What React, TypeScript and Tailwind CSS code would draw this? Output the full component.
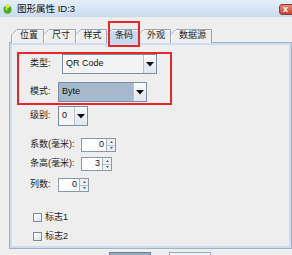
import React from 'react'

const tabs = [
  { label: '位置', w: 33, cls: 'w-[33px]' },
  { label: '尺寸', w: 33, cls: 'w-[33px] -ml-px' },
  { label: '样式', w: 32, cls: 'w-[32px] -ml-px' },
  { label: '条码', w: 33, cls: 'w-[33px] -ml-px', selected: true },
  { label: '外观', w: 33, cls: 'w-[33px] -ml-px' },
  { label: '数据源', w: 42, cls: 'w-[42px] -ml-px' },
]

function Tab({ label, w, cls, selected }: { label: string; w: number; cls: string; selected?: boolean }) {
  const h = 13
  return (
    <div className={`relative h-[13px] flex items-center justify-center ${cls}`}>
      <svg className="absolute inset-0" width={w} height={h + 1}>
        <path
          d={`M0.5 ${h + 1} L0.5 6 L6 0.5 L${w - 0.5} 0.5 L${w - 0.5} ${h + 1}`}
          fill={selected ? '#c6d9ee' : '#eeeeee'}
          stroke="#9aa6b4"
        />
        <path d={`M1.5 ${h + 1} L1.5 6.4 L6.4 1.5 L${w - 1.5} 1.5`} fill="none" stroke="#ffffff" />
      </svg>
      <span className="relative pl-[3px] text-[9px] leading-none text-[#222]">{label}</span>
    </div>
  )
}

function Arrow() {
  return (
    <svg width="8" height="5" viewBox="0 0 8 5">
      <path d="M0 0 H8 L4 4.5 Z" fill="#111" />
    </svg>
  )
}

function Combo({ value, cls, selected }: { value: string; cls: string; selected?: boolean }) {
  return (
    <div className={`flex h-[20px] border border-[#7f8fa2] ${cls}`}>
      <div className={`flex-1 flex items-center pl-[3px] text-[9px] text-[#111] ${selected ? 'bg-[#a5b8cc]' : 'bg-[#f4f4f4]'}`}>
        {value}
      </div>
      <div className="w-[13px] flex items-center justify-center border-l border-[#b6c3d1] bg-gradient-to-b from-[#fafbfc] to-[#dfe6ee]">
        <Arrow />
      </div>
    </div>
  )
}

function Spinner({ value, cls }: { value: string; cls: string }) {
  return (
    <div className={`flex h-[14px] border border-[#8a98a8] bg-white ${cls}`}>
      <div className="flex-1 flex items-center justify-end pr-[2px] text-[9px] text-[#111]">{value}</div>
      <div className="w-[9px] flex flex-col border-l border-[#a8b4c2]">
        <div className="flex-1 flex items-center justify-center bg-[#eef1f4] border-b border-[#b8c2cd]">
          <svg width="3" height="2"><path d="M0 2 L1.5 0 L3 2 Z" fill="#555" /></svg>
        </div>
        <div className="flex-1 flex items-center justify-center bg-[#eef1f4]">
          <svg width="3" height="2"><path d="M0 0 L1.5 2 L3 0 Z" fill="#555" /></svg>
        </div>
      </div>
    </div>
  )
}

function Check({ label, cls }: { label: string; cls: string }) {
  return (
    <div className={`flex items-center h-[10px] pl-[21px] ${cls}`}>
      <div className="w-[9px] h-[9px] border border-[#7d8c9c] bg-gradient-to-br from-[#ffffff] to-[#dde5ee]" />
      <span className="ml-[3px] text-[9px] leading-none text-[#222]">{label}</span>
    </div>
  )
}

export default function App() {
  return (
    <div className="relative w-[292px] h-[255px] overflow-hidden bg-[#eeeeee] font-['Liberation_Sans','Noto_Sans_CJK_SC',sans-serif]">
      {/* title bar */}
      <div className="flex items-start h-[17px] bg-gradient-to-b from-[#e6eff9] to-[#c9dbef]">
        <svg className="ml-[3px] mt-[3px] shrink-0" width="9" height="11" viewBox="0 0 9 11">
          <ellipse cx="4.5" cy="6.5" rx="4" ry="4.2" fill="#4fae1c" />
          <ellipse cx="4.5" cy="3" rx="2.6" ry="2" fill="#e8e14a" />
          <ellipse cx="3.4" cy="6" rx="1.2" ry="1.4" fill="#9be06a" />
        </svg>
        <span className="ml-[5px] mt-[4px] text-[9.5px] leading-none text-[#111]">图形属性 ID:3</span>
        <div className="ml-auto -mr-[6px] mt-[4px] w-[19px] h-[11px] rounded-[3px] border border-[#8d3a32] bg-gradient-to-b from-[#e5887a] to-[#c1432f] flex items-center pl-[3px]">
          <span className="text-[9px] leading-none font-bold text-white">x</span>
        </div>
      </div>

      {/* tabs */}
      <div className="flex mt-[12px] ml-[11px]">
        {tabs.map((t) => (
          <Tab key={t.label} {...t} />
        ))}
      </div>

      {/* panel */}
      <div className="ml-[9px] w-[283px] h-[207px] border border-[#9fb2c7]">
        <div className="h-full border-2 border-[#cddcee] text-[9px] text-[#222]">
          <div className="ml-[5px] mt-[7px] w-[155px] h-[53px] border-2 border-[#e8262c]">
            <div className="flex items-center h-[20px] pl-[11px]">
              <span className="w-[32px]">类型:</span>
              <Combo value="QR Code" cls="w-[95px]" />
            </div>
            <div className="flex items-center h-[20px] mt-[8px] pl-[11px]">
              <span className="w-[28px]">模式:</span>
              <Combo value="Byte" cls="w-[89px]" selected />
            </div>
          </div>
          <div className="flex items-center h-[20px] mt-[1px] pl-[18px]">
            <span className="w-[28px]">级别:</span>
            <Combo value="0" cls="w-[30px]" />
          </div>

          <div className="flex items-center mt-[12px] pl-[18px]">
            <span className="w-[51px]">系数(毫米):</span>
            <Spinner value="0" cls="w-[35px]" />
          </div>
          <div className="flex items-center mt-[5px] pl-[18px]">
            <span className="w-[51px]">条高(毫米):</span>
            <Spinner value="3" cls="w-[31px]" />
          </div>
          <div className="flex items-center mt-[7px] pl-[18px]">
            <span className="w-[28px]">列数:</span>
            <Spinner value="0" cls="w-[31px]" />
          </div>

          <Check label="标志1" cls="mt-[20px]" />
          <Check label="标志2" cls="mt-[9px]" />
        </div>
      </div>

      {/* dialog buttons (cut off) */}
      <div className="flex mt-[3px]">
        <div className="ml-[109px] w-[42px] h-[20px] border border-[#6f7f8f] bg-[#9aa9b7]" />
        <div className="ml-[18px] w-[42px] h-[20px] border border-[#9aa8b6] bg-[#f2f4f6]" />
      </div>

      {/* annotation around selected tab */}
      <div className="absolute left-[108px] top-[21px] w-[32px] h-[26px] border-2 border-[#e8262c]" />
    </div>
  )
}
